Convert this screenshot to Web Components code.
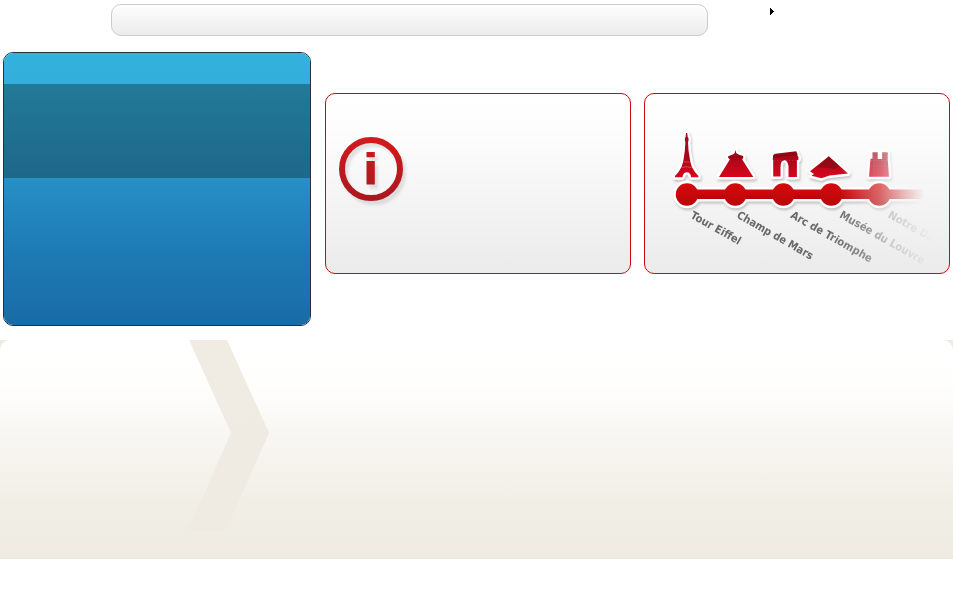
<!DOCTYPE html>
<html lang="fr">
<head>
<meta charset="utf-8">
<title>Paris</title>
<style>
html, body { margin: 0; background: #fff; font-family: "DejaVu Sans", sans-serif; }
</style>
</head>
<body>
<paris-page></paris-page>
<script>
function define(name, html) {
  const template = document.createElement('template');
  template.innerHTML = html;
  customElements.define(name, class extends HTMLElement {
    constructor() {
      super();
      this.attachShadow({ mode: 'open' }).append(template.content.cloneNode(true));
    }
  });
}

define('top-bar', `
<style>
:host { display: grid; grid-template-columns: 597px 1fr; padding: 4px 0 0 111px; height: 48px; box-sizing: border-box; }
.bar { box-sizing: border-box; height: 32px; border: 1px solid #ccc; border-radius: 10px; background: linear-gradient(#fefefe, #ebebeb); }
svg { display: block; margin: 4px 0 0 62px; }
</style>
<div class="bar"></div>
<svg width="4" height="7" shape-rendering="crispEdges"><path d="M0 0h1v1h1v1h1v1h1v1h-1v1h-1v1h-1v1h-1z"/></svg>`);

define('search-panel', `
<style>
:host { display: flex; flex-direction: column; box-sizing: border-box; width: 308px; height: 274px; border: 1px solid #26313a; border-radius: 10px; overflow: hidden; }
.head { height: 31px; background: linear-gradient(#32b2dd, #34aedb); }
.tabs { height: 94px; background: linear-gradient(#237a98, #1e678a); }
.body { flex: 1; background: linear-gradient(#2790c7, #1e7ab4 50%, #196ca6); }
</style>
<div class="head"></div><div class="tabs"></div><div class="body"></div>`);

define('red-card', `
<style>
:host { display: block; box-sizing: border-box; width: 306px; height: 181px; border: 1px solid #c90a10; border-radius: 10px; background: linear-gradient(#fff, #fdfdfd 20%, #ebebeb); overflow: hidden; }
</style>
<slot></slot>`);

define('info-icon', `
<style>
:host { display: block; padding: 39px 0 0 9px; }
svg { display: block; filter: drop-shadow(3px 4px 1.5px #0000001a); }
</style>
<svg width="72" height="76" viewBox="335 133 72 76">
<defs><linearGradient id="r" gradientUnits="userSpaceOnUse" x1="0" y1="137" x2="0" y2="201"><stop stop-color="#d21a1e"/><stop offset="1" stop-color="#a8181e"/></linearGradient></defs>
<circle cx="371" cy="169" r="29" fill="none" stroke="url(#r)" stroke-width="6"/>
<path fill="url(#r)" d="M366.5 152h8.3v5.3h-8.3zM366.5 161h8.3v23.5h-8.3z"/>
</svg>`);

define('metro-line', `
<style>
:host { display: block; }
svg { display: block; font: bold 11px "DejaVu Sans", sans-serif; }
.outline { filter: drop-shadow(1px 2px 1px #0003); }
</style>
<svg width="304" height="179" viewBox="645 94 304 179">
<defs>
<linearGradient id="fade" gradientUnits="userSpaceOnUse" x1="840" y1="0" x2="924" y2="0"><stop stop-color="#fff"/><stop offset=".48" stop-color="#999"/><stop offset=".75" stop-color="#444"/><stop offset="1" stop-color="#000"/></linearGradient>
<linearGradient id="textFade" gradientUnits="userSpaceOnUse" x1="825" y1="0" x2="932" y2="0"><stop stop-color="#fff"/><stop offset=".35" stop-color="#bbb"/><stop offset=".6" stop-color="#4a4a4a"/><stop offset=".85" stop-color="#1c1c1c"/><stop offset="1" stop-color="#000"/></linearGradient>
<linearGradient id="sights" gradientUnits="userSpaceOnUse" x1="0" y1="138" x2="0" y2="177"><stop stop-color="#a0101c"/><stop offset=".4" stop-color="#a00818"/><stop offset="1" stop-color="#d8061c"/></linearGradient>
<linearGradient id="line" x2="0" y2="1"><stop stop-color="#d50a0d"/><stop offset="1" stop-color="#b80609"/></linearGradient>
<mask id="m" maskUnits="userSpaceOnUse" x="645" y="94" width="304" height="179"><rect x="645" y="94" width="304" height="179" fill="url(#fade)"/></mask>
<mask id="tm" maskUnits="userSpaceOnUse" x="645" y="94" width="304" height="179"><rect x="645" y="94" width="304" height="179" fill="url(#textFade)"/></mask>
<path id="track" d="M687 189.5H924V199H687z"/>
<g id="stops"><circle cx="687" cy="194.5" r="11.2"/><circle cx="735.3" cy="194.5" r="11.2"/><circle cx="783.3" cy="194.5" r="11.2"/><circle cx="831.3" cy="194.5" r="11.2"/><circle cx="879.3" cy="194.5" r="11.2"/></g>
<g id="shapes">
<path d="M686 133h1.2l.5 4 .8 1v3l-.5 1 .6 9 1.3 8 .5 3 1.5 5 3 5 3.5 4v1.2h-7.2q-.8-5-4.4-5t-4.4 5H675v-1.2l3.5-4 3-5 1.6-5 .5-3 1.2-8 .6-9-.5-1v-3l.7-1z"/>
<path d="M735.4 150l.8 3 2.2 1.4 4.8 1.7v2l-1 1.3L753.3 177H719l10.8-17.6-1.6-1.6v-1.5l4.4-1.9 2-1.2z"/>
<path d="M773.2 155l2-1.2 21-2.6 1.2 4.4 1 1.5v2.6l-1.5.5v16.7h-8.4V166q-1-6-4.3-5.8-3.7.2-3.7 7.1v9.2h-7.3v-16l-.5-1z"/>
<path d="M828.8 156.3L848 173.5l-18.5 2-8 2.7-10-2.4 2.5-1.8-4-2.8z"/>
<path d="M872.5 152.3h5.2v6.6h4.5v-6.6h5.5v6.5l1.3 18h-20l1.5-18h2z"/>
</g>
</defs>
<g mask="url(#m)">
<g class="outline" fill="#fff" stroke="#fff" stroke-width="5" stroke-linejoin="round"><use href="#track"/><use href="#stops"/><use href="#shapes"/></g>
<use href="#track" fill="url(#line)"/>
<use href="#shapes" fill="url(#sights)"/>
<g fill="url(#line)"><circle cx="687" cy="194.5" r="11.2"/><circle cx="735.3" cy="194.5" r="11.2"/><circle cx="783.3" cy="194.5" r="11.2"/><circle cx="831.3" cy="194.5" r="11.2"/><circle cx="879.3" cy="194.5" r="11.2"/></g>
<path fill="none" stroke="#e8b0b4" stroke-width=".4" d="M683.8 162h5.6M682 167.5q4.7-1.5 9.3 0"/>
<path fill="#7f0912" d="M728.5 156.8q7-1 14.5 0v1.2h-14.5zM731 159h9.6v1.2H731zM773.5 155.3l22.7-3.5 1.8 3-24.5 3.5zM828.8 156.8l10 9-4 3-17-1.5z" opacity=".65"/>
<path stroke="#c84652" stroke-width=".7" stroke-dasharray="1 2" d="M774 160.3h23" fill="none"/>
<path stroke="#a04654" stroke-width=".7" stroke-dasharray="1 1.5" d="M871 160.5h17M871 166h17M874 153v23M885 153v23" fill="none"/>
</g>
<g fill="#686868" mask="url(#tm)">
<text transform="translate(689.7 217.5) rotate(29.3)" textLength="56" lengthAdjust="spacingAndGlyphs">Tour Eiffel</text>
<text transform="translate(736 217.2) rotate(29.7)" textLength="86" lengthAdjust="spacingAndGlyphs">Champ de Mars</text>
<text transform="translate(789.7 217.2) rotate(29.5)" textLength="92" lengthAdjust="spacingAndGlyphs">Arc de Triomphe</text>
<text transform="translate(838.7 217) rotate(29.5)" textLength="96" lengthAdjust="spacingAndGlyphs">Musée du Louvre</text>
<text transform="translate(887.3 217) rotate(29.5)" textLength="51" lengthAdjust="spacingAndGlyphs">Notre Da</text>
</g>
</svg>`);

define('step-banner', `
<style>
:host { display: block; height: 219px; background: #efebe2; }
.surface { height: 100%; border-radius: 10px 10px 0 0; background: linear-gradient(#fff, #fefefd 20%, #f8f6f2 45%, #f1eee6 75%, #efebe2); padding-left: 188px; box-sizing: border-box; }
svg { display: block; }
</style>
<div class="surface"><svg width="82" height="191" viewBox="0 0 82 191">
<defs><linearGradient id="g" x2="0" y2="1"><stop stop-color="#f0ebe3"/><stop offset="1" stop-color="#efebe3"/></linearGradient></defs>
<path fill="url(#g)" d="M1 0h38l42 93-43 97H0l43-97z"/>
</svg></div>`);

define('paris-page', `
<style>
:host { display: flex; flex-direction: column; height: 600px; overflow: hidden; }
.row { display: grid; grid-template-columns: 308px 306px 306px; column-gap: 14px; padding: 4px 0 14px 3px; }
.row > red-card { margin-top: 41px; }
.row > red-card:last-child { margin-left: -1px; }
</style>
<top-bar></top-bar>
<div class="row">
<search-panel></search-panel>
<red-card><info-icon></info-icon></red-card>
<red-card><metro-line></metro-line></red-card>
</div>
<step-banner></step-banner>`);
</script>
</body>
</html>
